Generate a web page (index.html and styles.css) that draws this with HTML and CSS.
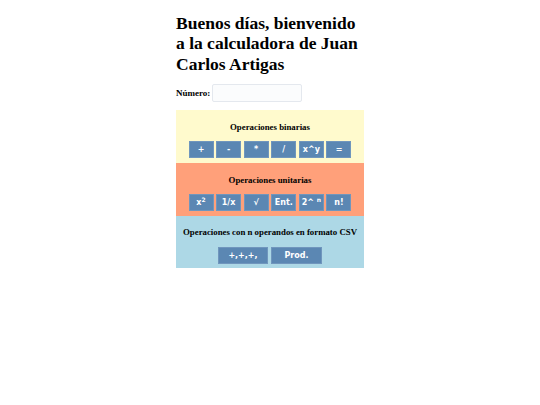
FILE: index.html
```html
<!DOCTYPE html>
<html lang="es">
<head>
<meta charset="utf-8">
<title>Calculadora</title>
<link rel="stylesheet" href="styles.css">
</head>
<body>
<main class="page">
  <h1 class="title">Buenos días, bienvenido a la calculadora de Juan Carlos Artigas</h1>
  <div class="field">
    <label class="field-label" for="numero">Número:</label>
    <input class="field-input" id="numero" type="text">
  </div>
  <section class="panel panel-binary">
    <h3 class="panel-title">Operaciones binarias</h3>
    <div class="btn-row">
      <button class="btn">+</button>
      <button class="btn">-</button>
      <button class="btn">*</button>
      <button class="btn">/</button>
      <button class="btn">x^y</button>
      <button class="btn">=</button>
    </div>
  </section>
  <section class="panel panel-unary">
    <h3 class="panel-title">Operaciones unitarias</h3>
    <div class="btn-row">
      <button class="btn">x<sup>2</sup></button>
      <button class="btn">1/x</button>
      <button class="btn">√</button>
      <button class="btn">Ent.</button>
      <button class="btn">2^ <sup>n</sup></button>
      <button class="btn">n!</button>
    </div>
  </section>
  <section class="panel panel-csv">
    <h3 class="panel-title">Operaciones con n operandos en formato CSV</h3>
    <div class="btn-row btn-row-wide">
      <button class="btn btn-wide">+,+,+,</button>
      <button class="btn btn-wide2">Prod.</button>
    </div>
  </section>
</main>
</body>
</html>
```

FILE: styles.css
```css
html, body {
  margin: 0;
  padding: 0;
  background: #ffffff;
}

body {
  font-family: "Liberation Serif", "Times New Roman", serif;
  color: #000;
}

.page {
  width: 188px;
  margin: 0 auto;
  padding-top: 13px;
}

.title {
  margin: 0;
  font-size: 17.5px;
  line-height: 20.3px;
  font-weight: bold;
}

.field {
  display: flex;
  align-items: center;
  gap: 2px;
  margin-top: 10px;
  height: 18px;
}

.field-label {
  font-size: 9px;
  font-weight: bold;
}

.field-input {
  box-sizing: border-box;
  width: 90px;
  height: 18px;
  margin: 0;
  padding: 0 3px;
  border: 1px solid #e4e8ee;
  border-radius: 2px;
  background: #fbfcfd;
  font-size: 9px;
}

.panel {
  box-sizing: border-box;
  height: 52.7px;
  padding: 11.5px 0 4px;
  text-align: center;
}

.field + .panel {
  margin-top: 8.5px;
}

.panel-binary { background: #fffacd; }
.panel-unary { background: #ffa07a; }
.panel-csv { background: #add8e6; }

.panel-title {
  margin: 0 0 8.5px;
  font-size: 8.8px;
  line-height: 11px;
  font-weight: bold;
}

.btn-row {
  display: flex;
  justify-content: center;
  gap: 2.6px;
}

.btn-row-wide {
  gap: 3px;
}

.btn {
  box-sizing: border-box;
  width: 25px;
  height: 17px;
  margin: 0;
  padding: 0;
  border: 1px solid #7096bd;
  border-radius: 0;
  background: #5b87b3;
  color: #ffffff;
  font-family: "DejaVu Sans", Verdana, sans-serif;
  font-size: 8px;
  font-weight: bold;
  line-height: 15px;
  text-align: center;
}

.btn sup {
  font-size: 6px;
  line-height: 0;
  vertical-align: 3px;
}

.btn-wide { width: 50px; }
.btn-wide2 { width: 51px; }
```
